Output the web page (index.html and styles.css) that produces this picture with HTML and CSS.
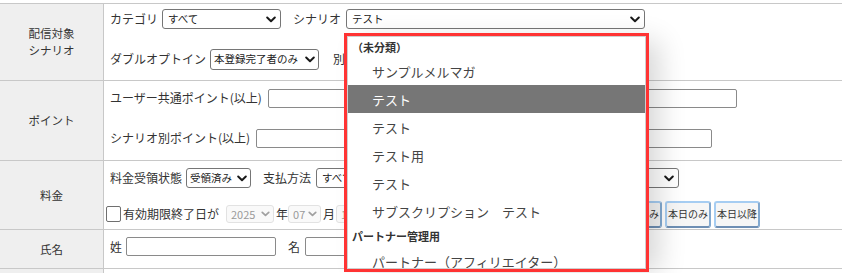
FILE: index.html
```html
<!DOCTYPE html>
<html lang="ja">
<head>
<meta charset="utf-8">
<title>配信対象</title>
<link rel="stylesheet" href="styles.css">
</head>
<body>
<div class="page">
  <div class="tbl">
    <div class="row r1">
      <div class="th">配信対象<br>シナリオ</div>
      <div class="td">
        <div class="line">
          <span class="lbl">カテゴリ</span>
          <div class="sel s-cat"><span>すべて</span><svg class="chev" width="10" height="7" viewBox="0 0 10 7"><path d="M1.2 1.5 L5 5.2 L8.8 1.5" /></svg></div>
          <span class="lbl gap12">シナリオ</span>
          <div class="sel s-scn"><span>テスト</span><svg class="chev" width="10" height="7" viewBox="0 0 10 7"><path d="M1.2 1.5 L5 5.2 L8.8 1.5" /></svg></div>
        </div>
        <div class="line line-b">
          <span class="lbl">ダブルオプトイン</span>
          <div class="sel s-dbl"><span>本登録完了者のみ</span><svg class="chev" width="10" height="7" viewBox="0 0 10 7"><path d="M1.2 1.5 L5 5.2 L8.8 1.5" /></svg></div>
          <span class="lbl gap14">別シナリオ</span>
        </div>
      </div>
    </div>
    <div class="row r2">
      <div class="th">ポイント</div>
      <div class="td">
        <div class="line">
          <span class="lbl">ユーザー共通ポイント(以上)</span>
          <span class="inp i-user"></span>
        </div>
        <div class="line line-b">
          <span class="lbl">シナリオ別ポイント(以上)</span>
          <span class="inp i-scn"></span>
        </div>
      </div>
    </div>
    <div class="row r3">
      <div class="th">料金</div>
      <div class="td">
        <div class="line">
          <span class="lbl">料金受領状態</span>
          <div class="sel s-rcv"><span>受領済み</span><svg class="chev" width="10" height="7" viewBox="0 0 10 7"><path d="M1.2 1.5 L5 5.2 L8.8 1.5" /></svg></div>
          <span class="lbl gap12">支払方法</span>
          <div class="sel s-pay"><span>すべて</span><svg class="chev" width="10" height="7" viewBox="0 0 10 7"><path d="M1.2 1.5 L5 5.2 L8.8 1.5" /></svg></div>
        </div>
        <div class="line line-c">
          <span class="chk"></span>
          <span class="lbl chk-lbl">有効期限終了日が</span>
          <div class="sel dis s-year"><span>2025</span><svg class="chev" width="9" height="6" viewBox="0 0 10 7"><path d="M1.2 1.5 L5 5.2 L8.8 1.5" /></svg></div>
          <span class="lbl unit">年</span>
          <div class="sel dis s-mon"><span>07</span><svg class="chev" width="9" height="6" viewBox="0 0 10 7"><path d="M1.2 1.5 L5 5.2 L8.8 1.5" /></svg></div>
          <span class="lbl unit">月</span>
          <div class="sel dis s-day"><span>14</span><svg class="chev" width="9" height="6" viewBox="0 0 10 7"><path d="M1.2 1.5 L5 5.2 L8.8 1.5" /></svg></div>
          <span class="lbl unit">日</span>
          <span class="btn b-first">本日以前のみ</span>
          <span class="btn">本日のみ</span>
          <span class="btn">本日以降</span>
        </div>
      </div>
    </div>
    <div class="row r4">
      <div class="th">氏名</div>
      <div class="td">
        <div class="line line-n">
          <span class="lbl">姓</span>
          <span class="inp i-sei"></span>
          <span class="lbl gap12">名</span>
          <span class="inp i-mei"></span>
        </div>
      </div>
    </div>
    <div class="row r5">
      <div class="th"></div>
      <div class="td"></div>
    </div>
  </div>

  <div class="popup">
    <div class="popup-inner">
      <div class="grp">（未分類）</div>
      <div class="opt">サンプルメルマガ</div>
      <div class="opt hl">テスト</div>
      <div class="opt">テスト</div>
      <div class="opt">テスト用</div>
      <div class="opt">テスト</div>
      <div class="opt">サブスクリプション　テスト</div>
      <div class="grp grp2">パートナー管理用</div>
      <div class="opt">パートナー（アフィリエイター）</div>
    </div>
  </div>
</div>
</body>
</html>
```

FILE: styles.css
```css
* { box-sizing: border-box; }
html, body {
  margin: 0;
  padding: 0;
  background: #fff;
}
body {
  font-family: "Noto Sans CJK JP", "Noto Sans", sans-serif;
  color: #333;
  overflow: hidden;
}
.page {
  position: relative;
  width: 842px;
  height: 273px;
  padding-top: 3px;
  overflow: hidden;
}
.tbl {
  border-top: 1px solid #c8c8c8;
}
.row {
  display: flex;
  border-bottom: 1px solid #c8c8c8;
}
.r1 { height: 77px; }
.r2 { height: 80px; }
.r3 { height: 69px; }
.r4 { height: 39px; }
.r5 { height: 4px; border-bottom: none; }
.th {
  flex: none;
  width: 104px;
  background: #efefef;
  border-right: 1px solid #c8c8c8;
  display: flex;
  align-items: center;
  justify-content: center;
  text-align: center;
  font-size: 11.5px;
  line-height: 17px;
  color: #333;
}
.td {
  flex: 1;
  padding-left: 6px;
  padding-top: 5px;
}
.r2 .td, .r3 .td, .r4 .td { padding-top: 7px; }
.line {
  display: flex;
  align-items: center;
  height: 20px;
  white-space: nowrap;
}
.line-b { margin-top: 20px; }
.line-c { margin-top: 12px; height: 28px; }
.line-n { height: 19px; }
.lbl {
  font-size: 12px;
  line-height: 16px;
  color: #333;
}
.gap12 { margin-left: 12px; }
.gap14 { margin-left: 14px; }

.sel {
  flex: none;
  display: flex;
  align-items: center;
  justify-content: space-between;
  height: 20px;
  margin-left: 4px;
  padding: 0 4px 0 5px;
  border: 1px solid #767676;
  border-radius: 3px;
  background: #fff;
  font-size: 10.5px;
  line-height: 14px;
  color: #222;
  overflow: hidden;
}
.sel .chev { flex: none; }
.sel .chev path {
  fill: none;
  stroke: #1a1a1a;
  stroke-width: 2;
  stroke-linecap: round;
  stroke-linejoin: round;
}
.s-cat { width: 119px; }
.s-scn { width: 299px; margin-left: 5px; }
.s-dbl { width: 109px; height: 21px; padding-left: 3px; padding-right: 3px; }
.s-rcv { width: 65px; padding-left: 3px; padding-right: 3px; }
.s-pay { width: 363px; margin-left: 5px; }

.sel.dis {
  height: 18px;
  background: #f9f9f9;
  border-color: #e2e2e2;
  color: #9a9a9a;
  padding: 0 3px 0 4px;
  font-size: 11px;
}
.sel.dis .chev path { stroke: #a0a0a0; }
.s-year { width: 48px; margin-left: 7px; }
.s-mon { width: 33px; margin-left: 0; }
.s-day { width: 40px; margin-left: 1px; }
.unit { margin-left: 2px; }

.inp {
  flex: none;
  display: block;
  height: 19px;
  border: 1px solid #8a8a8a;
  border-radius: 2px;
  background: #fff;
}
.i-user { width: 469px; margin-left: 6px; }
.i-scn { width: 456px; margin-left: 6px; }
.i-sei { width: 150px; height: 19px; margin-left: 4px; }
.i-mei { width: 300px; height: 19px; margin-left: 5px; }

.chk {
  flex: none;
  display: block;
  width: 15px;
  height: 16px;
  margin-left: -4px;
  border: 1px solid #6f6f6f;
  border-radius: 2px;
  background: #fff;
}
.chk-lbl { margin-left: 2px; }

.btn {
  flex: none;
  display: flex;
  align-items: center;
  height: 27px;
  padding: 0 1px;
  margin-left: 3px;
  border: 2px solid #a6cdf2;
  border-right-color: #82a9d0;
  border-bottom-color: #6e8fb4;
  border-radius: 3px;
  background: #f6f6f6;
  font-size: 10px;
  line-height: 14px;
  color: #333;
}
.b-first { margin-left: 206px; }

.popup {
  position: absolute;
  left: 344px;
  top: 33px;
  width: 305px;
  height: 239px;
  border: 3px solid #ff3333;
  background: #fff;
  box-shadow: 14px 4px 26px -4px rgba(0, 0, 0, 0.16);
}
.popup-inner {
  height: 100%;
  border: 1px solid #cfcfcf;
  overflow: hidden;
}
.grp {
  height: 20px;
  display: flex;
  align-items: center;
  padding-left: 4px;
  font-size: 11px;
  font-weight: bold;
  color: #333;
}
.grp2 { height: 22px; }
.opt {
  height: 28px;
  display: flex;
  align-items: center;
  padding-left: 24px;
  font-size: 13px;
  color: #444;
  white-space: nowrap;
}
.opt.hl {
  background: #767676;
  color: #fff;
}
```
